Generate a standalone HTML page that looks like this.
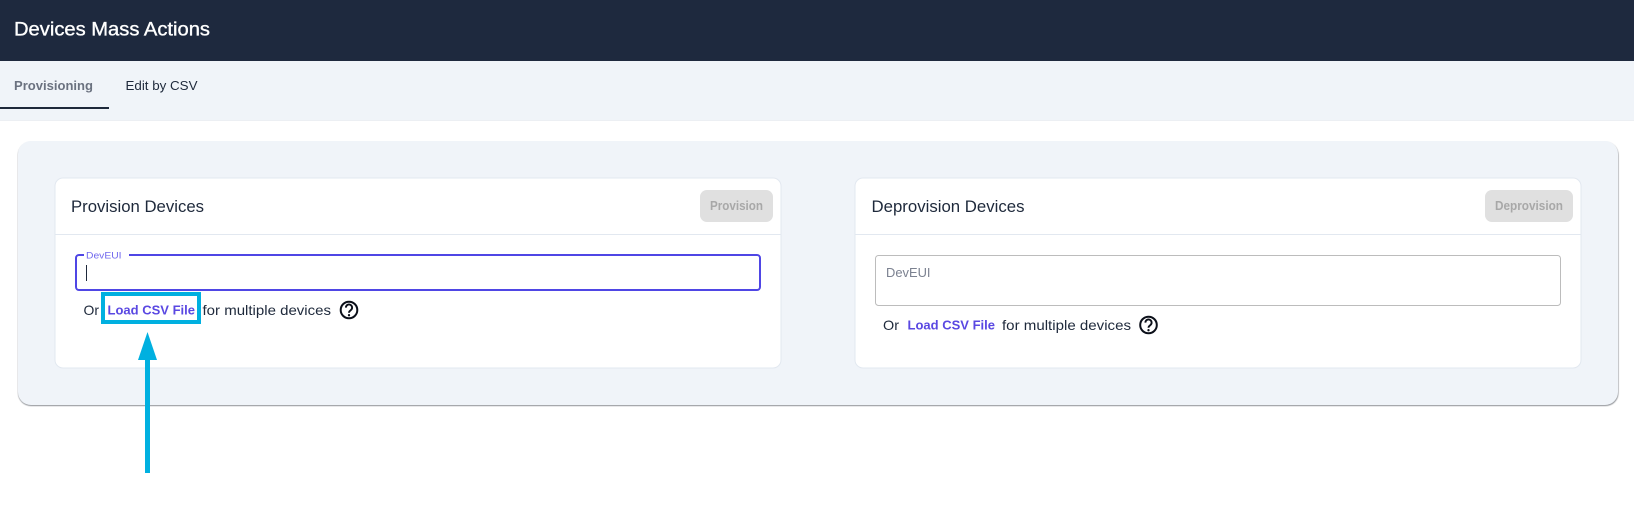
<!DOCTYPE html>
<html lang="en"><head><meta charset="utf-8"><title>Devices Mass Actions</title>
<style>
html,body{margin:0;padding:0;background:#fff;width:1634px;height:507px;overflow:hidden}
svg{display:block}
text{font-family:"Liberation Sans",Arial,sans-serif}
</style></head><body>
<svg width="1634" height="507" viewBox="0 0 1634 507" xmlns="http://www.w3.org/2000/svg">
<defs><filter id="s" x="-2%" y="-5%" width="104%" height="110%"><feGaussianBlur stdDeviation="0.5"/></filter></defs>
<rect width="1634" height="507" fill="#fff"/>
<rect width="1634" height="61" fill="#1e293e"/>
<rect y="61" width="1634" height="59" fill="#f0f4f9"/>
<rect y="120" width="1634" height="1" fill="#eceff3"/>
<text x="14" y="35.5" font-size="19" fill="#fff" stroke="#fff" stroke-width="0.35" textLength="196" lengthAdjust="spacingAndGlyphs">Devices Mass Actions</text>
<text x="14" y="90" font-size="13" font-weight="700" fill="#6b7280" textLength="79" lengthAdjust="spacingAndGlyphs">Provisioning</text>
<text x="125.5" y="90" font-size="13" fill="#1e293b" textLength="72" lengthAdjust="spacingAndGlyphs">Edit by CSV</text>
<rect y="107" width="109" height="2" fill="#1e293b"/>

<rect x="18" y="142" width="1600.5" height="264" rx="13" fill="#8f9297" filter="url(#s)"/>
<rect x="18" y="141" width="1600" height="264" rx="13" fill="#f0f4f9"/>

<rect x="55" y="178" width="726" height="190" rx="8" fill="#fff" stroke="#e2e8f0" stroke-width="1"/>
<rect x="55" y="234" width="726" height="1" fill="#e2e8f0"/>
<text x="71" y="212" font-size="16.5" fill="#1e293b" textLength="133" lengthAdjust="spacingAndGlyphs">Provision Devices</text>
<rect x="700" y="190" width="73" height="32" rx="7" fill="#e0e0e0"/>
<text x="710" y="210" font-size="12.5" font-weight="700" fill="#a8a8a8" textLength="53" lengthAdjust="spacingAndGlyphs">Provision</text>

<rect x="76" y="255" width="684" height="35" rx="3" fill="#fff" stroke="#4f46e5" stroke-width="2"/>
<rect x="84" y="252" width="45" height="5" fill="#fff"/>
<text x="86" y="258.5" font-size="9.5" fill="#7168ee" textLength="35.5" lengthAdjust="spacingAndGlyphs">DevEUI</text>
<rect x="86" y="265" width="1" height="16" fill="#1e293b"/>

<text x="83.5" y="315" font-size="14" fill="#1e293b" textLength="15.5" lengthAdjust="spacingAndGlyphs">Or</text>
<text x="107.5" y="314.5" font-size="12.5" font-weight="700" fill="#5a48e2" textLength="87.5" lengthAdjust="spacingAndGlyphs">Load CSV File</text>
<rect x="103" y="294" width="96" height="28" fill="none" stroke="#00b0e0" stroke-width="4"/>
<text x="202.5" y="315" font-size="14" fill="#1e293b" textLength="128.5" lengthAdjust="spacingAndGlyphs">for multiple devices</text>
<circle cx="349" cy="310" r="8.3" fill="none" stroke="#0b0f19" stroke-width="2"/>
<path d="M345.9 307.6a3.1 3.1 0 1 1 4.9 2.5c-1.2.9-1.8 1.4-1.8 2.7" fill="none" stroke="#0b0f19" stroke-width="1.9"/>
<circle cx="349" cy="315.2" r="1.15" fill="#0b0f19"/>

<rect x="855" y="178" width="726" height="190" rx="8" fill="#fff" stroke="#e2e8f0" stroke-width="1"/>
<rect x="855" y="234" width="726" height="1" fill="#e2e8f0"/>
<text x="871.5" y="212" font-size="16.5" fill="#1e293b" textLength="153" lengthAdjust="spacingAndGlyphs">Deprovision Devices</text>
<rect x="1485" y="190" width="88" height="32" rx="7" fill="#e0e0e0"/>
<text x="1495" y="210" font-size="12.5" font-weight="700" fill="#a8a8a8" textLength="68" lengthAdjust="spacingAndGlyphs">Deprovision</text>

<rect x="875.5" y="255.5" width="685" height="50" rx="3" fill="#fff" stroke="#bcbcbc" stroke-width="1"/>
<text x="886" y="277" font-size="13" fill="#7b8190" textLength="44.5" lengthAdjust="spacingAndGlyphs">DevEUI</text>

<text x="883" y="330" font-size="14" fill="#1e293b" textLength="16" lengthAdjust="spacingAndGlyphs">Or</text>
<text x="907.5" y="329.5" font-size="12.5" font-weight="700" fill="#5a48e2" textLength="87.5" lengthAdjust="spacingAndGlyphs">Load CSV File</text>
<text x="1002" y="330" font-size="14" fill="#1e293b" textLength="129" lengthAdjust="spacingAndGlyphs">for multiple devices</text>
<circle cx="1148.5" cy="325" r="8.3" fill="none" stroke="#0b0f19" stroke-width="2"/>
<path d="M1145.4 322.6a3.1 3.1 0 1 1 4.9 2.5c-1.2.9-1.8 1.4-1.8 2.7" fill="none" stroke="#0b0f19" stroke-width="1.9"/>
<circle cx="1148.5" cy="330.2" r="1.15" fill="#0b0f19"/>

<rect x="145" y="358" width="5" height="115" fill="#00b0e0"/>
<path d="M147.5 332L157 360H138Z" fill="#00b0e0"/>
</svg>
</body></html>
